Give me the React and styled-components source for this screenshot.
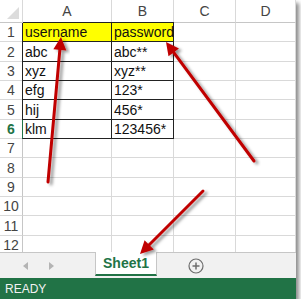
import React from "react";
import styled, { createGlobalStyle } from "styled-components";

const GlobalStyle = createGlobalStyle`
  html, body {
    margin: 0;
    padding: 0;
    background: #ffffff;
  }
  * {
    box-sizing: border-box;
  }
`;

const Frame = styled.div`
  position: relative;
  width: 296px;
  height: 299px;
  display: flex;
  flex-direction: column;
  background: #fff;
  box-shadow: 3px 3px 4px rgba(0, 0, 0, 0.45);
  font-family: "Liberation Sans", Arial, sans-serif;
`;

const GridArea = styled.div`
  height: 252px;
  overflow: hidden;
`;

const Grid = styled.div`
  display: grid;
  grid-template-columns: 23px 89px 62px 62px 60px;
  grid-template-rows: 23px repeat(12, 19.35px);
`;

const Corner = styled.div`
  position: relative;
  border-right: 1px solid #d9d9d9;
  border-bottom: 1px solid #c6c6c6;
  &::after {
    content: "";
    position: absolute;
    right: 3px;
    bottom: 3px;
    width: 0;
    height: 0;
    border-left: 12px solid transparent;
    border-bottom: 12px solid #dcdcdc;
  }
`;

const ColHead = styled.div`
  display: flex;
  align-items: center;
  justify-content: center;
  font-size: 14px;
  color: #444;
  border-right: 1px solid #d9d9d9;
  border-bottom: 1px solid #c6c6c6;
`;

const RowHead = styled.div`
  display: flex;
  align-items: center;
  justify-content: center;
  font-size: 14px;
  font-weight: ${(p) => (p.$active ? 700 : 400)};
  color: ${(p) => (p.$active ? "#217346" : "#444")};
  border-right: 1px solid #c6c6c6;
  border-bottom: 1px solid #d9d9d9;
`;

const Cell = styled.div`
  display: flex;
  align-items: center;
  padding-left: 2px;
  font-size: 14px;
  color: #111;
  white-space: nowrap;
  background: ${(p) => (p.$fill ? "#ffff00" : "transparent")};
  border-right: 1px solid ${(p) => (p.$boxed ? "#222" : "#d9d9d9")};
  border-bottom: 1px solid ${(p) => (p.$boxed ? "#222" : "#d9d9d9")};
  border-left: ${(p) => (p.$left ? `1px solid ${p.$left}` : "none")};
  border-top: ${(p) => (p.$top ? "1px solid #222" : "none")};
  margin-left: ${(p) => (p.$left ? "-1px" : "0")};
  margin-top: ${(p) => (p.$top ? "-1px" : "0")};
`;

const TabBar = styled.div`
  height: 26px;
  display: flex;
  align-items: stretch;
  background: #f1f1f1;
  border-top: 1px solid #c6c6c6;
`;

const NavArrows = styled.div`
  width: 95px;
  display: flex;
  align-items: center;
  gap: 21px;
  padding-left: 23px;
`;

const Tri = styled.span`
  width: 0;
  height: 0;
  border-top: 4px solid transparent;
  border-bottom: 4px solid transparent;
  ${(p) =>
    p.$dir === "left"
      ? "border-right: 5px solid #b4b4b4;"
      : "border-left: 5px solid #b4b4b4;"}
`;

const SheetTab = styled.div`
  width: 62px;
  margin-top: -1px;
  margin-bottom: 2px;
  display: flex;
  align-items: center;
  justify-content: center;
  background: #fff;
  border-left: 1px solid #c6c6c6;
  border-right: 1px solid #c6c6c6;
  border-bottom: 2px solid #217346;
  color: #217346;
  font-weight: 700;
  font-size: 14px;
`;

const AddSheet = styled.div`
  display: flex;
  align-items: center;
  padding-left: 31px;
`;

const StatusBar = styled.div`
  flex: 1;
  display: flex;
  align-items: center;
  padding-left: 5px;
  background: #217346;
  color: #f2f2f2;
  font-size: 12px;
`;

const Overlay = styled.svg`
  position: absolute;
  left: 0;
  top: 0;
  width: 296px;
  height: 299px;
  pointer-events: none;
  overflow: visible;
`;

const cols = ["A", "B", "C", "D"];
const data = [
  ["username", "password"],
  ["abc", "abc**"],
  ["xyz", "xyz**"],
  ["efg", "123*"],
  ["hij", "456*"],
  ["klm", "123456*"],
];

const arrows = [
  { from: [48, 182], to: [61, 37] },
  { from: [254, 161], to: [166, 42] },
  { from: [203, 191], to: [140, 254] },
];

function Arrow({ from, to }) {
  const dx = to[0] - from[0];
  const dy = to[1] - from[1];
  const len = Math.hypot(dx, dy);
  const ux = dx / len;
  const uy = dy / len;
  const L = 13;
  const W = 6.5;
  const bx = to[0] - ux * L;
  const by = to[1] - uy * L;
  const pts = [
    [to[0], to[1]],
    [bx - uy * W, by + ux * W],
    [bx + uy * W, by - ux * W],
  ]
    .map((p) => p.join(","))
    .join(" ");
  return (
    <g filter="url(#shade)">
      <line
        x1={from[0]}
        y1={from[1]}
        x2={bx + ux * 2}
        y2={by + uy * 2}
        stroke="#c00000"
        strokeWidth="3"
        strokeLinecap="round"
      />
      <polygon points={pts} fill="#c00000" />
    </g>
  );
}

export default function App() {
  return (
    <>
      <GlobalStyle />
      <Frame>
        <GridArea>
          <Grid>
            <Corner />
            {cols.map((c) => (
              <ColHead key={c}>{c}</ColHead>
            ))}
            {Array.from({ length: 12 }, (_, r) => {
              const row = data[r];
              return (
                <React.Fragment key={r}>
                  <RowHead $active={r === 5}>{r + 1}</RowHead>
                  {cols.map((c, ci) => {
                    const boxed = row && ci < 2;
                    return (
                      <Cell
                        key={c}
                        $boxed={boxed}
                        $fill={r === 0 && ci < 2}
                        $top={r === 0 && ci < 2}
                        $left={
                          boxed && ci === 0
                            ? r === 5
                              ? "#217346"
                              : "#222"
                            : null
                        }
                      >
                        {boxed ? row[ci] : ""}
                      </Cell>
                    );
                  })}
                </React.Fragment>
              );
            })}
          </Grid>
        </GridArea>
        <TabBar>
          <NavArrows>
            <Tri $dir="left" />
            <Tri $dir="right" />
          </NavArrows>
          <SheetTab>Sheet1</SheetTab>
          <AddSheet>
            <svg width="16" height="16" viewBox="0 0 16 16">
              <circle cx="8" cy="8" r="7" fill="none" stroke="#6d6d6d" strokeWidth="1.2" />
              <path d="M8 4.5v7M4.5 8h7" stroke="#6d6d6d" strokeWidth="1.5" />
            </svg>
          </AddSheet>
        </TabBar>
        <StatusBar>READY</StatusBar>
        <Overlay viewBox="0 0 296 299">
          <defs>
            <filter id="shade" x="-20%" y="-20%" width="140%" height="140%">
              <feDropShadow dx="3" dy="2" stdDeviation="1.6" floodColor="#000" floodOpacity="0.4" />
            </filter>
          </defs>
          {arrows.map((a, i) => (
            <Arrow key={i} {...a} />
          ))}
        </Overlay>
      </Frame>
    </>
  );
}
